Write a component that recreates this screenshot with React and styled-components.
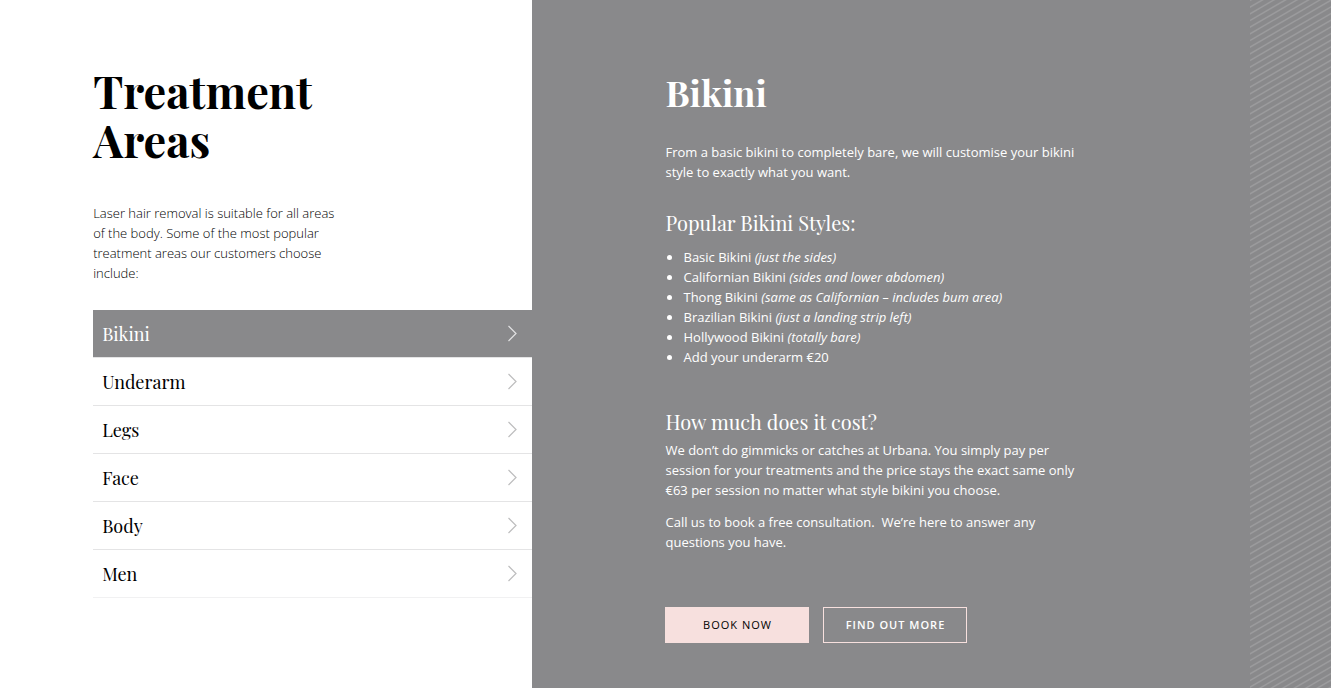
import React, { useState } from "react";
import styled, { createGlobalStyle } from "styled-components";

const GlobalStyle = createGlobalStyle`
  * { box-sizing: border-box; }
  body {
    margin: 0;
    background: #fff;
    color: #000;
    font-family: "Open Sans", "Liberation Sans", sans-serif;
    font-size: 13px;
    line-height: 20px;
  }
  h1, h2, h3, p, ul { margin: 0; }
`;

const serif = `"Playfair Display", "Liberation Serif", serif`;

const Page = styled.main`
  display: grid;
  grid-template-columns: 40% 1fr;
  min-height: 100vh;
`;

const Sidebar = styled.section`
  padding: 66px 0 68px 7vw;
`;

const Title = styled.h1`
  max-width: 260px;
  font: 700 45px/49px ${serif};
`;

const Intro = styled.p`
  max-width: 252px;
  margin-top: 39px;
  font-weight: 300;
`;

const AreaList = styled.nav`
  display: flex;
  flex-direction: column;
  margin-top: 27px;
`;

const AreaButton = styled.button`
  display: flex;
  align-items: center;
  justify-content: space-between;
  height: 48px;
  padding: 0 14px 0 9px;
  border: 0;
  border-bottom: 1px solid #e4e4e5;
  background: ${({ $active }) => ($active ? "#89898b" : "#fff")};
  color: ${({ $active }) => ($active ? "#fff" : "#000")};
  font: 400 18px/24px ${serif};
  text-align: left;
  cursor: pointer;

  &:last-child {
    border-bottom-color: #f1f1f2;
  }
`;

const Chevron = styled.svg`
  width: 11px;
  height: 17px;
  fill: none;
  stroke: ${({ $active }) => ($active ? "#e2e2e3" : "#bdbdbe")};
  stroke-width: 1.2;
`;

const Detail = styled.section`
  display: grid;
  grid-template-columns: 1fr 81px;
  background: #89898b;
  color: #fff;
`;

const Content = styled.article`
  padding: 70px 0 45px 10vw;
`;

const DetailTitle = styled.h2`
  font: 700 36px/44px ${serif};
`;

const Subtitle = styled.h3`
  margin-top: ${({ $gap }) => $gap}px;
  font: 400 20px/28px ${serif};
`;

const Text = styled.p`
  max-width: 420px;
  margin-top: ${({ $gap }) => $gap}px;
  font-weight: 400;
`;

const StyleList = styled.ul`
  margin-top: 10px;
  padding-left: 18px;
`;

const Actions = styled.div`
  display: flex;
  gap: 14px;
  margin-top: 55px;
`;

const ActionLink = styled.a`
  display: flex;
  align-items: center;
  justify-content: center;
  width: 144px;
  height: 36px;
  border: 1px solid #f7e0de;
  background: ${({ $filled }) => ($filled ? "#f7e0de" : "transparent")};
  color: ${({ $filled }) => ($filled ? "#000" : "#fff")};
  font-size: 11px;
  font-weight: ${({ $filled }) => ($filled ? 400 : 600)};
  letter-spacing: 1px;
  text-decoration: none;
  text-transform: uppercase;
`;

const Stripes = styled.svg`
  width: 100%;
  height: 100%;
`;

const areas = ["Bikini", "Underarm", "Legs", "Face", "Body", "Men"];

const bikiniStyles = [
  ["Basic Bikini", "(just the sides)"],
  ["Californian Bikini", "(sides and lower abdomen)"],
  ["Thong Bikini", "(same as Californian – includes bum area)"],
  ["Brazilian Bikini", "(just a landing strip left)"],
  ["Hollywood Bikini", "(totally bare)"],
  ["Add your underarm €20", ""],
];

export default function App() {
  const [selected, setSelected] = useState("Bikini");

  return (
    <>
      <GlobalStyle />
      <Page>
        <Sidebar>
          <Title>Treatment Areas</Title>
          <Intro>
            Laser hair removal is suitable for all areas of the body. Some of the most popular
            treatment areas our customers choose include:
          </Intro>
          <AreaList aria-label="Treatment areas">
            {areas.map((area) => (
              <AreaButton
                key={area}
                type="button"
                $active={area === selected}
                onClick={() => setSelected(area)}
              >
                {area}
                <Chevron $active={area === selected} viewBox="0 0 11 17" aria-hidden="true">
                  <path d="M1.5 1 9 8.5 1.5 16" />
                </Chevron>
              </AreaButton>
            ))}
          </AreaList>
        </Sidebar>
        <Detail>
          <Content>
            <DetailTitle>Bikini</DetailTitle>
            <Text $gap={28}>
              From a basic bikini to completely bare, we will customise your bikini style to exactly
              what you want.
            </Text>
            <Subtitle $gap={27}>Popular Bikini Styles:</Subtitle>
            <StyleList>
              {bikiniStyles.map(([name, note]) => (
                <li key={name}>
                  {name} {note && <em>{note}</em>}
                </li>
              ))}
            </StyleList>
            <Subtitle $gap={41}>How much does it cost?</Subtitle>
            <Text $gap={4}>
              We don’t do gimmicks or catches at Urbana. You simply pay per session for your
              treatments and the price stays the exact same only €63 per session no matter what style
              bikini you choose.
            </Text>
            <Text $gap={12}>
              Call us to book a free consultation.&nbsp; We’re here to answer any questions you have.
            </Text>
            <Actions>
              <ActionLink href="#book" $filled>
                Book now
              </ActionLink>
              <ActionLink href="#more">Find out more</ActionLink>
            </Actions>
          </Content>
          <Stripes aria-hidden="true">
            <defs>
              <pattern id="stripes" width="23" height="20" patternUnits="userSpaceOnUse">
                <path
                  d="M-23 20.5 46 -19.5M-23 27.17 46 -12.83M-23 33.83 46 -6.17M-23 40.5 46 .5M-23 13.83 46 -26.17M-23 47.17 46 7.17"
                  fill="none"
                  stroke="#9b9b9d"
                  strokeWidth="1.5"
                />
              </pattern>
            </defs>
            <rect width="100%" height="100%" fill="url(#stripes)" />
          </Stripes>
        </Detail>
      </Page>
    </>
  );
}
